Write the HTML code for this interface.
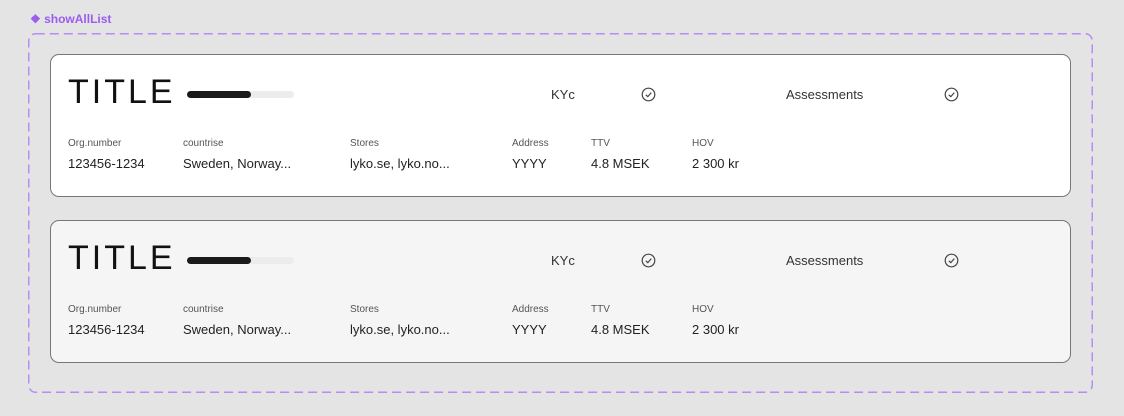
<!DOCTYPE html>
<html><head><style>
body{margin:0;width:1124px;height:416px;background:#e4e4e4;font-family:"Liberation Sans",sans-serif;position:relative;overflow:hidden}
.lbl{position:absolute;left:30px;top:12px;color:#9b5cf0;font-size:12px;font-weight:bold}
svg.d{position:absolute;left:0;top:0}
.card{position:absolute;left:50px;width:1019px;height:141px;border:1.5px solid #777;border-radius:9px;background:#fff}
.card *{position:absolute;white-space:nowrap;color:#222}
.t{left:17px;top:18px;font-size:34px;letter-spacing:3px;font-family:"Liberation Sans",sans-serif;color:#111}
.bar{left:136px;top:36px;width:107px;height:7px;background:#ececec;border-radius:4px}
.bar i{left:0;top:0;width:64px;height:7px;background:#1a1a1a;border-radius:4px}
.s{font-size:13px;top:32px;color:#333}
.k{font-size:10px;top:83px;color:#555}
.v{font-size:13px;top:101px;color:#222}
.c{top:32px}
</style></head><body>
<div class="lbl">❖ showAllList</div>
<svg class="d" width="1124" height="416"><rect x="28.75" y="33.75" width="1063.5" height="358.5" rx="7" fill="none" stroke="#b58df5" stroke-width="1.5" stroke-dasharray="9 5"/></svg>
<div class="card" style="top:54px">
<div class="t">TITLE</div><div class="bar"><i></i></div>
<div class="s" style="left:500px">KYc</div>
<svg class="c" style="left:590px" width="15" height="15" viewBox="0 0 15 15"><circle cx="7.5" cy="7.5" r="6.3" fill="none" stroke="#444" stroke-width="1.2"/><path d="M4.8 7.8 L6.8 9.6 L10.3 5.6" fill="none" stroke="#444" stroke-width="1.2"/></svg>
<div class="s" style="left:735px">Assessments</div>
<svg class="c" style="left:893px" width="15" height="15" viewBox="0 0 15 15"><circle cx="7.5" cy="7.5" r="6.3" fill="none" stroke="#444" stroke-width="1.2"/><path d="M4.8 7.8 L6.8 9.6 L10.3 5.6" fill="none" stroke="#444" stroke-width="1.2"/></svg>
<div class="k" style="left:17px">Org.number</div><div class="v" style="left:17px">123456-1234</div>
<div class="k" style="left:132px">countrise</div><div class="v" style="left:132px">Sweden, Norway...</div>
<div class="k" style="left:299px">Stores</div><div class="v" style="left:299px">lyko.se, lyko.no...</div>
<div class="k" style="left:461px">Address</div><div class="v" style="left:461px">YYYY</div>
<div class="k" style="left:540px">TTV</div><div class="v" style="left:540px">4.8 MSEK</div>
<div class="k" style="left:641px">HOV</div><div class="v" style="left:641px">2 300 kr</div>
</div>
<div class="card" style="top:220px;background:#f5f5f5">
<div class="t">TITLE</div><div class="bar"><i></i></div>
<div class="s" style="left:500px">KYc</div>
<svg class="c" style="left:590px" width="15" height="15" viewBox="0 0 15 15"><circle cx="7.5" cy="7.5" r="6.3" fill="none" stroke="#444" stroke-width="1.2"/><path d="M4.8 7.8 L6.8 9.6 L10.3 5.6" fill="none" stroke="#444" stroke-width="1.2"/></svg>
<div class="s" style="left:735px">Assessments</div>
<svg class="c" style="left:893px" width="15" height="15" viewBox="0 0 15 15"><circle cx="7.5" cy="7.5" r="6.3" fill="none" stroke="#444" stroke-width="1.2"/><path d="M4.8 7.8 L6.8 9.6 L10.3 5.6" fill="none" stroke="#444" stroke-width="1.2"/></svg>
<div class="k" style="left:17px">Org.number</div><div class="v" style="left:17px">123456-1234</div>
<div class="k" style="left:132px">countrise</div><div class="v" style="left:132px">Sweden, Norway...</div>
<div class="k" style="left:299px">Stores</div><div class="v" style="left:299px">lyko.se, lyko.no...</div>
<div class="k" style="left:461px">Address</div><div class="v" style="left:461px">YYYY</div>
<div class="k" style="left:540px">TTV</div><div class="v" style="left:540px">4.8 MSEK</div>
<div class="k" style="left:641px">HOV</div><div class="v" style="left:641px">2 300 kr</div>
</div>
</body></html>
